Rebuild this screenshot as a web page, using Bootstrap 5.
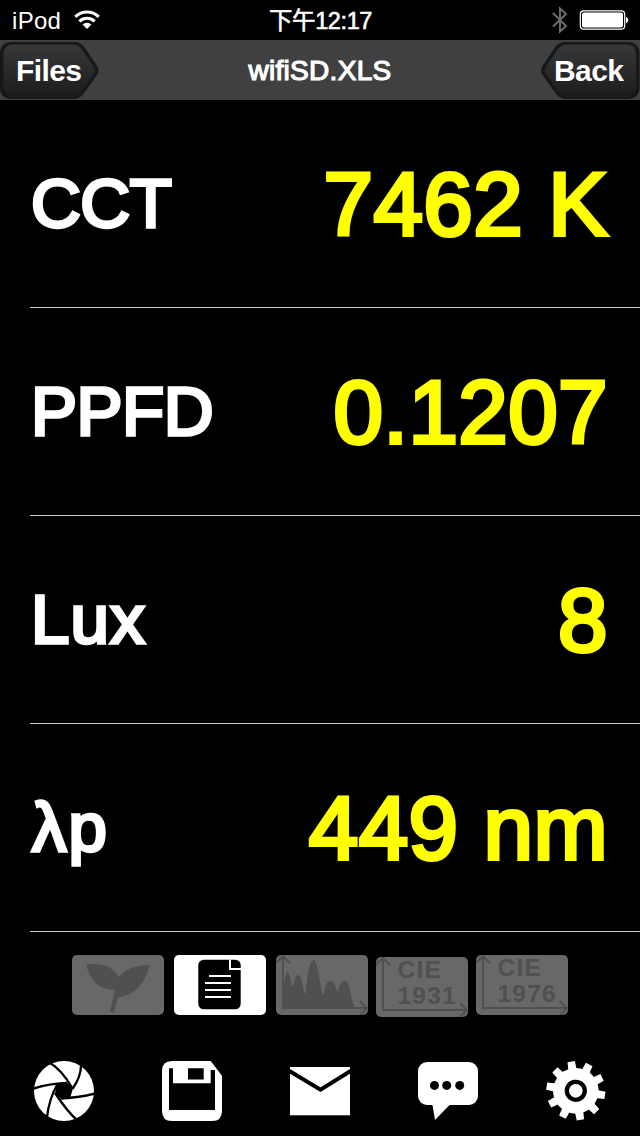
<!DOCTYPE html>
<html lang="zh-Hant">
<head>
<meta charset="utf-8">
<meta name="viewport" content="width=device-width, initial-scale=1">
<title>wifiSD.XLS</title>
<link href="https://cdn.jsdelivr.net/npm/bootstrap@5.3.0/dist/css/bootstrap.min.css" rel="stylesheet">
<style>
body{background:#000;color:#fff;font-family:"Liberation Sans","Noto Sans CJK TC",sans-serif;width:640px;height:1136px;overflow:hidden}
svg{display:block;flex:none}
.status-bar{height:40px;font-size:24px;line-height:40px;padding:0 11px 0 12px}
.status-side{width:200px}
.carrier{letter-spacing:.3px;padding-top:2px}
.wifi{margin-right:112px}
.clock{font-size:23.5px;letter-spacing:-.4px;-webkit-text-stroke:.6px #fff;white-space:nowrap;padding-top:2px}
.title-bar{height:60px;background:#404040}
.arrow-btn{width:100px;height:60px;border:0;background:none;color:#fff;font-weight:700;font-size:30px;line-height:60px;letter-spacing:-.6px;text-align:left;padding:1px 0 0 16px;position:relative}
.arrow-btn.back{padding-left:14px}
.arrow-btn svg{position:absolute;left:0;top:0}
.arrow-btn span{position:relative}
.file-title{font-size:28px;letter-spacing:.3px;-webkit-text-stroke:1.2px #fff;padding-top:2px}
.reading{height:208px;margin-left:30px;padding-right:32px;border-bottom:1px solid #c8c7cc}
.reading-name{font-size:69px;line-height:1;letter-spacing:-.5px;padding-left:1px;-webkit-text-stroke:3.4px #fff}
.reading-name.loose{letter-spacing:1.2px}
.reading-name.wide{letter-spacing:2px;padding-left:2px}
.reading-value{font-size:89px;line-height:1;letter-spacing:.4px;color:#ff0;-webkit-text-stroke:3.9px #ff0;padding-top:1px}
.tabs-row{padding:23px 0 0 72px;height:110px}
.tile{width:92px;height:60px;border-radius:5px;background:#686868;border:0;padding:0;overflow:hidden;color:#505050}
.tile.on{background:#fff;color:#000}
.tile text{font:700 24.500px "Liberation Sans",sans-serif;letter-spacing:1.2px;fill:currentColor}
.tool{width:128px;border:0;background:none;padding:0}
</style>
</head>
<body>
<header>
  <div class="status-bar d-flex justify-content-between align-items-center">
    <div class="status-side d-flex align-items-center">
      <span class="carrier">iPod</span>
      <svg class="wifi ms-auto" width="26" height="20" viewBox="0 0 26 20" fill="none" stroke="#fff" stroke-width="3.2"><path d="M1.300 6.800a16.600 16.600 0 0 1 23.400 0M5.400 11.300a11 11 0 0 1 15.200 0"/><path d="M8.600 14.400a6.400 6.400 0 0 1 8.800 0L13 19z" fill="#fff" stroke="none"/></svg>
    </div>
    <div class="clock">下午12:17</div>
    <div class="status-side d-flex align-items-center justify-content-end">
      <svg width="16" height="28" viewBox="0 0 16 28" fill="none" stroke="#6b6b6b" stroke-width="2"><path d="M1 7l13 13-6 5.500V2.500L14 8 1 20.500"/></svg>
      <svg style="margin-left:11px" width="50" height="20" viewBox="0 0 50 20"><rect x="1.300" y=".8" width="44.400" height="18.400" rx="3.500" fill="none" stroke="#fff" stroke-width="1.200"/><rect x="3" y="2.500" width="41" height="15" rx="2" fill="#fff"/><path d="M47 7c3 .6 3 5.600 0 6.200z" fill="#fff"/></svg>
    </div>
  </div>
  <nav class="title-bar d-flex justify-content-between align-items-center">
    <button class="arrow-btn">
      <svg width="100" height="60" viewBox="0 0 100 60">
        <defs><linearGradient id="btnFill" x1="0" y1="0" x2="0" y2="1"><stop offset="0" stop-color="#37383a"/><stop offset=".45" stop-color="#2b2c2e"/><stop offset="1" stop-color="#1b1c1e"/></linearGradient></defs>
        <g id="btnShape"><path d="M12 2H74Q80 2 84 6.500L97 26Q100 31 97 35L84 53Q80 59 73 59H12Q0 59 0 47V14Q0 2 12 2Z" fill="#161718"/><path d="M14 4H73Q78 4 81.500 8.500L94 27Q96.500 31 94 34L80.500 52.500Q77 56.500 72 56.500H14Q3 56.500 3 45V15Q3 4 14 4Z" fill="url(#btnFill)" stroke="#1c1d1e" stroke-width="1"/></g>
      </svg><span>Files</span>
    </button>
    <div class="file-title">wifiSD.XLS</div>
    <button class="arrow-btn back">
      <svg width="100" height="60" viewBox="0 0 100 60"><use href="#btnShape" transform="matrix(-1 0 0 1 99.500 0)"/></svg><span>Back</span>
    </button>
  </nav>
</header>
<main>
  <div class="reading d-flex justify-content-between align-items-center"><span class="reading-name">CCT</span><span class="reading-value">7462 K</span></div>
  <div class="reading d-flex justify-content-between align-items-center"><span class="reading-name">PPFD</span><span class="reading-value">0.1207</span></div>
  <div class="reading d-flex justify-content-between align-items-center"><span class="reading-name loose">Lux</span><span class="reading-value">8</span></div>
  <div class="reading d-flex justify-content-between align-items-center"><span class="reading-name wide">λp</span><span class="reading-value">449 nm</span></div>
</main>
<div class="tabs-row d-flex align-items-start">
  <button class="tile" aria-label="Plant"><svg width="92" height="60" viewBox="0 0 92 60" fill="currentColor"><path d="M14.300 9.500Q38 6 46.700 22.300Q56 10 77.700 10Q71 39 45.600 42.700L42 57.800L38 57L43 35Q19 34 14.300 9.500Z"/></svg></button>
  <button class="tile on" style="margin-left:10px" aria-label="List"><svg width="92" height="60" viewBox="0 0 92 60"><rect x="24.300" y="4.700" width="42.400" height="49.600" rx="5.500"/><path d="M56 4.500V14H67M35 21H57M31 28H57M31 35H57M31 42H57" fill="none" stroke="#fff" stroke-width="2"/></svg></button>
  <button class="tile" style="margin-left:10px" aria-label="Spectrum"><svg width="92" height="60" viewBox="0 0 92 60" fill="currentColor"><path d="M7 53V28H8.500Q9.500 17 11.500 17Q14 17 15.500 31H17.500Q19 20 22 20Q26 20 28 38H29.500C31 25 33 5 37.700 5C42 5 43.500 28 46.500 39H48C49 30 51 26 54.500 26C58.500 26 59.500 32 61.500 37C63 31 65 26 69.300 26C74 26 74 43 79 53Z"/><path id="axes" d="M7 1V53H91M0 8L7 1L14 8M84 46L91 53L84 60" fill="none" stroke="currentColor" stroke-width="2"/></svg></button>
  <button class="tile" style="margin:2px 0 0 8px" aria-label="CIE 1931"><svg width="92" height="60" viewBox="0 0 92 60"><use href="#axes"/><text x="21.500" y="21">CIE</text><text x="21.500" y="46.500">1931</text></svg></button>
  <button class="tile" style="margin-left:8px" aria-label="CIE 1976"><svg width="92" height="60" viewBox="0 0 92 60"><use href="#axes"/><text x="21.500" y="21">CIE</text><text x="21.500" y="46.500">1976</text></svg></button>
</div>
<footer class="d-flex" style="padding-top:19px">
  <button class="tool d-flex justify-content-center" aria-label="Capture"><svg width="60" height="60" viewBox="0 0 60 60"><circle cx="30" cy="30" r="30" fill="#fff"/><path d="M22.500 23L32 20.800L39 27L36.500 36L28 38.500L21 33Z"/><path d="M15.500 1.500Q28 9 38.500 27.500M47 3Q47.500 15 38.500 28M61 32.500Q47 36.500 27 37.500M43 59Q34 51.500 21 32M13 56Q15 38 23.500 23M-1 27.800Q11 23 33 21.800" fill="none" stroke="#000" stroke-width="2.300"/></svg></button>
  <button class="tool d-flex justify-content-center" aria-label="Save"><svg width="60" height="60" viewBox="0 0 60 60"><path d="M10 0H48.700L60 14.700V50Q60 60 50 60H10Q0 60 0 50V10Q0 0 10 0Z" fill="#fff"/><path d="M7 7.300H11V22.300H48.700V9H53V49H7ZM26 7.300H41.700V18.500H26Z"/></svg></button>
  <button class="tool d-flex justify-content-center" aria-label="Mail"><svg width="60" height="60" viewBox="0 0 60 60"><rect y="6" width="60" height="48.300" fill="#fff"/><path d="M-2 9.200L30.500 28.700L62 9.200" fill="none" stroke="#000" stroke-width="4"/></svg></button>
  <button class="tool d-flex justify-content-center" aria-label="Message"><svg width="60" height="60" viewBox="0 0 60 60"><rect y="1" width="60" height="43" rx="9" fill="#fff"/><path d="M14.300 43L17 59L32.500 43Z" fill="#fff"/><circle cx="16.500" cy="24.400" r="4.500"/><circle cx="28.700" cy="24.400" r="4.500"/><circle cx="41.700" cy="24.400" r="4.500"/></svg></button>
  <button class="tool d-flex justify-content-center" aria-label="Settings"><svg width="60" height="60" viewBox="0 0 60 60"><g transform="translate(29.800 29.800) rotate(-9)" fill="#fff"><circle r="22.800"/><g id="teeth"><path id="tooth" d="M-4.200 -20L-3.700 -29.500H3.700L4.200 -20Z"/><use href="#tooth" transform="rotate(36)"/><use href="#tooth" transform="rotate(72)"/><use href="#tooth" transform="rotate(108)"/><use href="#tooth" transform="rotate(144)"/></g><use href="#teeth" transform="rotate(180)"/><circle r="9" stroke="#000" stroke-width="4.300"/></g></svg></button>
</footer>
<script src="https://cdn.jsdelivr.net/npm/bootstrap@5.3.0/dist/js/bootstrap.bundle.min.js"></script>
</body>
</html>
